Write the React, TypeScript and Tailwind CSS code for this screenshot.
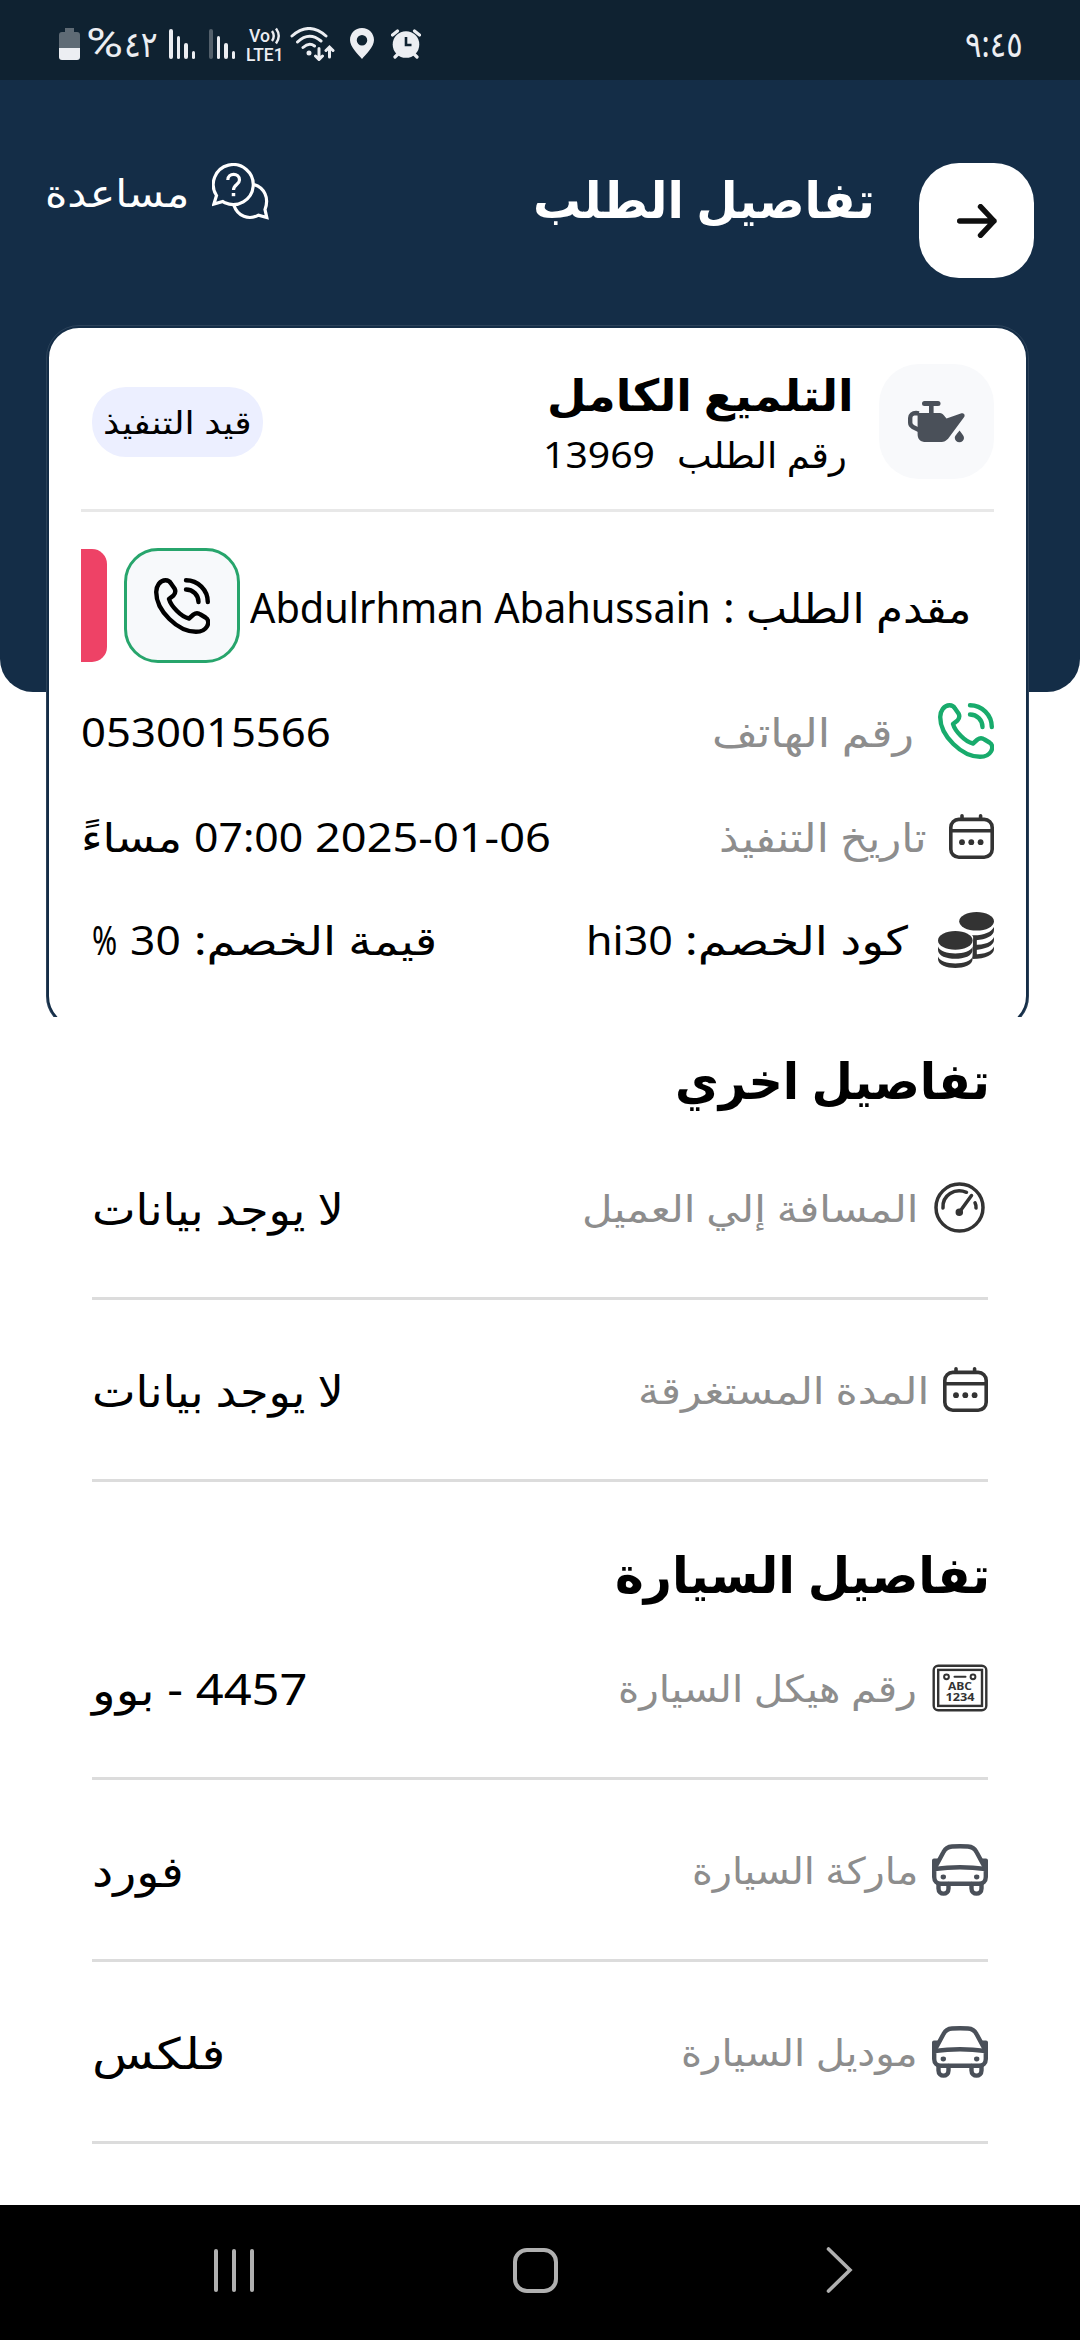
import { useLayoutEffect, useRef, useState, type ReactNode } from "react";

/* Single-line text that is stretched horizontally to a fixed width. */
function Fit({ w, className = "", dir = "rtl", children }: { w: number; className?: string; dir?: "rtl" | "ltr"; children: ReactNode }) {
  const ref = useRef<HTMLSpanElement>(null);
  const [scale, setScale] = useState(1);
  useLayoutEffect(() => {
    if (ref.current) setScale(w / ref.current.offsetWidth);
  }, [w]);
  return (
    <div dir="rtl" className={"flex shrink-0 justify-start whitespace-nowrap leading-none " + className} style={{ width: w }}>
      <span ref={ref} dir={dir} className="inline-block shrink-0 origin-right" style={{ transform: `scaleX(${scale})` }}>
        {children}
      </span>
    </div>
  );
}

function PhoneIcon() {
  return (
    <svg width="56" height="56" viewBox="0 0 56 56" fill="none" stroke="currentColor" strokeWidth="4.4" strokeLinecap="round" strokeLinejoin="round" className="shrink-0">
      <path d="M2.2 14C2.2 8 6 2.2 11.5 2.2C14 2.2 16 3.5 17 5.5L20.5 10.5C22 13 21.5 15 19.500 17.500L15 21C17 28 27 39 35 40.500L39.500 36.500C41.500 35 44.500 35 46.500 36.500L51.500 39.500C54.500 41.500 55 45 53 48.500C51 52 47 53.800 42 53.800C24 53.800 2.200 33 2.200 14Z" />
      <path d="M32 2.200C44 2.200 53.800 12 53.800 24M32 11.500C39 11.500 44.500 17 44.500 24" />
    </svg>
  );
}

function CalendarIcon() {
  return (
    <svg width="45" height="45" viewBox="0 0 45 45" fill="none" stroke="#333333" strokeWidth="3.600" strokeLinecap="round" className="shrink-0">
      <rect x="1.800" y="5.400" width="41.400" height="37.800" rx="8" />
      <path d="M2 16.700H43M13 1.800V5M31.600 1.800V5" />
      <g fill="#333333" stroke="none">
        <circle cx="13" cy="28.200" r="2.900" />
        <circle cx="22.300" cy="28.200" r="2.900" />
        <circle cx="31.600" cy="28.200" r="2.900" />
      </g>
    </svg>
  );
}

function CoinsIcon() {
  return (
    <svg width="56" height="56" viewBox="0 0 56 56" fill="#333333" className="shrink-0">
      <ellipse cx="38.6" cy="9.3" rx="17.4" ry="9.3" />
      <path d="M56 15V18C56 24 48 27.5 38 28.2L34 23.3C45 23.8 53 20.5 56 15Z" />
      <path d="M56 25V28C56 33.5 48 37.5 35.2 38.2V33C47 33 54 30 56 25Z" />
      <path d="M56 34.5V37C56 42.5 48 46.8 34.5 47L35.2 42.3C47 42.3 54 39.5 56 34.5Z" />
      <path d="M35.2 24H38.8V46H34.5Z" />
      <ellipse cx="17.3" cy="28.4" rx="17.3" ry="9.4" />
      <path d="M0 34.5C3 43.8 31.6 43.8 34.6 34.5V38C34.6 49.8 0 49.8 0 38Z" />
      <path d="M0 44.5C3 53.8 31.6 53.8 34.6 44.5V47C34.6 59 0 59 0 47Z" />
    </svg>
  );
}

function GaugeIcon() {
  return (
    <svg width="51" height="51" viewBox="0 0 51 51" fill="none" stroke="#333333" strokeWidth="3.500" strokeLinecap="round" className="mr-[3px] shrink-0">
      <circle cx="25.500" cy="25.500" r="23.500" />
      <path d="M9 26C8 13 21 5.500 32.500 10.300M41 20.800C41.800 22.500 42.200 24 42 26M37.500 13.500L25.500 30" />
      <circle cx="25.300" cy="30.300" r="2" />
    </svg>
  );
}

function PlateIcon() {
  return (
    <svg width="56" height="48" viewBox="0 0 56 48" fill="none" stroke="#333333" className="shrink-0">
      <rect x="1.700" y="1.700" width="52.600" height="44.600" rx="4.500" strokeWidth="2.400" />
      <rect x="6.200" y="5.900" width="43.800" height="36" strokeWidth="2.400" />
      <circle cx="14.500" cy="12.800" r="2.400" strokeWidth="2" />
      <circle cx="41" cy="12.800" r="2.400" strokeWidth="2" />
      <path d="M22.500 12.800H33.500" strokeWidth="2" strokeLinecap="round" />
      <g fill="#333333" stroke="none" className="font-['Open_Sans'] font-bold" textAnchor="middle">
        <text x="28" y="25.500" fontSize="11" textLength="24" lengthAdjust="spacingAndGlyphs">ABC</text>
        <text x="28" y="37" fontSize="10.500" textLength="29" lengthAdjust="spacingAndGlyphs">1234</text>
      </g>
    </svg>
  );
}

function CarIcon() {
  return (
    <svg width="56" height="52" viewBox="0 0 56 52" fill="none" stroke="#4a5059" strokeWidth="4.400" strokeLinecap="round" strokeLinejoin="round" className="shrink-0">
      <path d="M4.500 21L11.500 8C13.500 4 15.500 2.800 20 2.500Q28 1.900 36 2.500C40.500 2.800 42.500 4 44.500 8L51.500 21" />
      <path d="M2.500 25Q28 21.500 53.500 25M2.200 18V33C2.200 37 5 39.800 9 39.800H47C51 39.800 53.800 37 53.800 33V18" />
      <path d="M6.500 40V44.500C6.500 51.300 16.500 51.300 16.500 44.500V40M39.500 40V44.500C39.500 51.300 49.500 51.300 49.500 44.500V40" />
      <path d="M0 16.500Q0 14.500 2 14.500H7L4 23H0ZM56 16.500Q56 14.500 54 14.500H49L52 23H56Z" fill="#4a5059" stroke="none" />
      <g fill="#4a5059" stroke="none">
        <ellipse cx="11.300" cy="33" rx="2.700" ry="2.400" />
        <ellipse cx="44.700" cy="33" rx="2.700" ry="2.400" />
      </g>
    </svg>
  );
}

function OilCanIcon() {
  return (
    <svg width="57" height="42" viewBox="0 0 57 42" fill="#4a5059">
      <rect x="14" y="0" width="18.500" height="5" rx="2.500" />
      <rect x="21" y="3" width="4.600" height="11" />
      <path d="M9.600 12H31C34 12 35 13 38.500 17.500L53.500 12.300C56 11.500 57.500 14 56 16.200L41 36.500C38.500 39.800 36.500 41 32.500 41H18C12.500 41 9.600 38.500 9.600 33Z" />
      <path d="M11 12.500L8 12C4.500 12 2.200 14 2.200 17V21.500C2.200 23.500 3 24.800 5 26L11 29" fill="none" stroke="#4a5059" strokeWidth="4.400" />
      <path d="M51.500 29.500C54 33 56 34.500 56 37A4.600 4.200 0 0 1 46.800 37C46.800 34.500 49 33 51.500 29.500Z" />
    </svg>
  );
}

function HelpIcon() {
  return (
    <svg width="57" height="57" viewBox="0 0 57 57" fill="none" stroke="#fff" strokeWidth="3.200" strokeLinejoin="miter" className="shrink-0">
      <path d="M4.500 32.500A20 20 0 1 1 13 39.800L10.800 38.500L1.900 41.100Z" />
      <path d="M42 21.500C52 24.500 57.500 34.500 53 46.500L54.800 54.500L46.500 52.200C36.500 57.500 25.500 53 22 42.500" />
      <path d="M15.800 17C15.800 9.500 27.500 9.500 27.500 17C27.500 21.500 21.500 21.500 21.500 27" />
      <path d="M21.500 30V33.200" strokeWidth="3.500" />
    </svg>
  );
}

function SignalBars({ dim = false }: { dim?: boolean }) {
  return (
    <div className="flex h-[30px] items-end gap-[4px]">
      <div className={dim ? "h-[30px] w-[3.500px] rounded-full bg-[#53606b]" : "h-[30px] w-[3.500px] rounded-full bg-[#eceef2]"} />
      <div className="h-[23px] w-[3.500px] rounded-full bg-[#eceef2]" />
      <div className="h-[16px] w-[3.500px] rounded-full bg-[#eceef2]" />
      <div className="h-[8px] w-[3.500px] rounded-full bg-[#eceef2]" />
    </div>
  );
}

function StatusBar() {
  return (
    <div dir="ltr" className="flex h-[80px] items-center justify-between bg-[#0f2231] pt-[7px] pr-[57px] pl-[59px] text-[#eceef2]">
      <div className="flex items-center">
        <svg width="21" height="32" viewBox="0 0 21 32">
          <path d="M6 0H15V4H18Q21 4 21 7V20H0V7Q0 4 3 4H6Z" fill="#5f6b75" />
          <path d="M0 20H21V29Q21 32 18 32H3Q0 32 0 29Z" fill="#eceef2" />
        </svg>
        <Fit w={37} dir="ltr" className="ml-[6px] font-[Roboto] text-[41px]">%</Fit>
        <Fit w={34} className="ml-[1px] text-[36px]">٤٢</Fit>
        <div className="ml-[11px]"><SignalBars /></div>
        <div className="ml-[14px]"><SignalBars dim /></div>
        <svg width="42" height="44" viewBox="-2 -6 42 44" fill="#eceef2" className="ml-[9px] overflow-visible font-[Roboto] font-medium">
          <text x="3" y="14" fontSize="18" textLength="21" lengthAdjust="spacingAndGlyphs">Vo</text>
          <text x="0" y="32.500" fontSize="19" textLength="37.500" lengthAdjust="spacingAndGlyphs">LTE1</text>
          <path d="M26 3Q29.500 8 26 13M30 0.500Q35.500 8 30 15.500" fill="none" stroke="#eceef2" strokeWidth="2.400" />
        </svg>
        <svg width="46" height="34" viewBox="0 0 46 34" fill="none" stroke="#eceef2" strokeWidth="3" strokeLinecap="round" className="ml-[4px]">
          <path d="M2 9Q19 -6 36 9M7.500 15Q19 4 31 14M13 20.500Q19 15 24.500 19" />
          <circle cx="19" cy="26" r="1.500" fill="#eceef2" strokeWidth="2" />
          <path d="M29 21.500V32M25.500 29L29 32.500L32.500 29M39.500 30V20.500M36 23.500L39.500 20L43 23.500" />
        </svg>
        <svg width="24" height="31" viewBox="0 0 24 31" className="ml-[14px]">
          <path fillRule="evenodd" d="M12 0C5 0 0 5.500 0 12C0 19 8 26 12 31C16 26 24 19 24 12C24 5.500 19 0 12 0ZM12 7A5 5 0 1 1 12 17.500A5 5 0 1 1 12 7Z" fill="#eceef2" />
        </svg>
        <svg width="30" height="30" viewBox="0 0 30 30" className="ml-[17px]">
          <path d="M1.500 6L6.500 2M28.500 6L23.500 2M4 28L7 25M26 28L23 25" stroke="#eceef2" strokeWidth="3.200" strokeLinecap="round" />
          <circle cx="15" cy="15.500" r="13.300" fill="#eceef2" />
          <path d="M15 8V16H20.500" fill="none" stroke="#0f2231" strokeWidth="2.600" />
        </svg>
      </div>
      <Fit w={58} dir="ltr" className="text-[36px]">٩:٤٥</Fit>
    </div>
  );
}

function Header() {
  return (
    <header className="flex h-[612px] items-start rounded-b-[33px] bg-[#142d47] pt-[83px] pr-[46px] pl-[45px] text-white">
      <div className="flex h-[115px] w-[115px] items-center justify-center rounded-[40px] bg-white">
        <svg width="40" height="34" viewBox="0 0 40 34" fill="none" stroke="#0f0f0f" strokeWidth="5.400" strokeLinecap="round" strokeLinejoin="round">
          <path d="M2.700 17H37M23.500 2.700L37 17L23.500 31.300" />
        </svg>
      </div>
      <Fit w={342} className="mt-[11px] mr-[44px] text-[50px] font-bold">تفاصيل الطلب</Fit>
      <div className="mr-auto flex items-center gap-[23px]">
        <HelpIcon />
        <Fit w={144} className="text-[38px]">مساعدة</Fit>
      </div>
    </header>
  );
}

function OrderCard() {
  return (
    <div className="mr-[51px] ml-[46px] -mt-[367px] h-[692px] overflow-hidden">
      <section className="h-[704px] w-[983px] rounded-[33px] border-[3px] border-[#142d47] bg-white pr-[32px] pl-[32px] outline -outline-offset-1 outline-white/10">
        <div className="flex h-[184px] border-b-[3px] border-[#e8e8e8] pt-[36px]">
          <div className="flex h-[115px] w-[115px] items-center justify-center rounded-[40px] bg-[#f8f9fb]">
            <OilCanIcon />
          </div>
          <div className="mr-[25px]">
            <Fit w={307} className="mt-[8px] text-[44px] font-bold">التلميع الكامل</Fit>
            <div className="mt-[21px] mr-[7px] flex items-center gap-[22px] text-[36px]">
              <Fit w={170}>رقم الطلب</Fit>
              <Fit w={112} dir="ltr">13969</Fit>
            </div>
          </div>
          <div className="mt-[23px] mr-auto ml-[11px] flex h-[70px] w-[171px] items-center justify-center rounded-[34px] bg-[#ecefff]">
            <Fit w={149} className="text-[32px]">قيد التنفيذ</Fit>
          </div>
        </div>
        <div className="flex items-center pt-[36px]">
          <div className="flex items-center gap-[13px] pt-[4px] pr-[23px]">
            <Fit w={248} className="text-[41px]">مقدم الطلب :</Fit>
            <Fit w={460} dir="ltr" className="text-[41px]">Abdulrhman Abahussain</Fit>
          </div>
          <div className="mr-[10px] flex h-[115px] w-[116px] shrink-0 items-center justify-center rounded-[34px] border-[3px] border-[#27a56c] bg-[#f7f9fb] text-black">
            <PhoneIcon />
          </div>
          <div className="mr-auto h-[113px] w-[26px] rounded-r-[15px] bg-[#ee4266]" />
        </div>
        <div className="mt-[40px] flex h-[56px] items-center">
          <div className="text-[#18ab6c]"><PhoneIcon /></div>
          <Fit w={202} className="mt-[2px] mr-[24px] text-[40px] text-[#8d8d8d]">رقم الهاتف</Fit>
          <Fit w={250} dir="ltr" className="mt-[2px] mr-auto text-[40px]">0530015566</Fit>
        </div>
        <div className="mt-[49px] flex h-[57px] items-center">
          <CalendarIcon />
          <Fit w={208} className="mr-[22px] text-[40px] text-[#8d8d8d]">تاريخ التنفيذ</Fit>
          <div className="mr-auto flex gap-[12px] text-[40px]">
            <Fit w={236} dir="ltr">2025-01-06</Fit>
            <Fit w={109} dir="ltr">07:00</Fit>
            <Fit w={101}>مساءً</Fit>
          </div>
        </div>
        <div className="mt-[47px] flex h-[56px] items-center">
          <CoinsIcon />
          <div className="mr-[30px] flex gap-[12px] text-[40px]">
            <Fit w={223}>كود الخصم:</Fit>
            <Fit w={87} dir="ltr">hi30</Fit>
          </div>
          <div className="mr-auto ml-[11px] flex gap-[13px] text-[40px]">
            <Fit w={243}>قيمة الخصم:</Fit>
            <Fit w={51} dir="ltr">30</Fit>
            <Fit w={25} dir="ltr">%</Fit>
          </div>
        </div>
      </section>
    </div>
  );
}

type RowProps = { icon: ReactNode; label: string; labelW: number; gap: string; value: string; valueW: number };

function Row({ icon, label, labelW, gap, value, valueW }: RowProps) {
  return (
    <div className="mx-[92px] flex h-[182px] items-center border-b-[3px] border-[#dcdcdc]">
      {icon}
      <Fit w={labelW} className={gap + " text-[37px] text-[#8d8d8d]"}>{label}</Fit>
      <Fit w={valueW} className="mr-auto pt-[1px] text-[43px]">{value}</Fit>
    </div>
  );
}

function NavBar() {
  return (
    <div dir="ltr" className="mt-auto flex h-[135px] items-center justify-between bg-black pr-[227px] pb-[5px] pl-[214px]">
      <div className="flex gap-[14px]">
        <div className="h-[43px] w-[4px] rounded-full bg-[#b0b0b0]" />
        <div className="h-[43px] w-[4px] rounded-full bg-[#b0b0b0]" />
        <div className="h-[43px] w-[4px] rounded-full bg-[#b0b0b0]" />
      </div>
      <div className="mr-[9px] h-[45px] w-[45px] rounded-[14px] border-4 border-[#b0b0b0]" />
      <svg width="27" height="46" viewBox="0 0 27 46" fill="none" stroke="#b0b0b0" strokeWidth="3.600" strokeLinecap="round">
        <path d="M2.500 2L24 23L2.500 44" />
      </svg>
    </div>
  );
}

export default function App() {
  return (
    <main dir="rtl" className="flex h-[2340px] w-[1080px] flex-col overflow-hidden bg-white font-['Noto_Sans','DejaVu_Sans',sans-serif] text-black">
      <StatusBar />
      <Header />
      <OrderCard />
      <div className="mx-[90px] h-[101px] pt-[38px]">
        <Fit w={315} className="text-[50px] font-bold">تفاصيل اخري</Fit>
      </div>
      <Row icon={<GaugeIcon />} label="المسافة إلي العميل" labelW={336} gap="mr-[16px]" value="لا يوجد بيانات" valueW={252} />
      <Row icon={<CalendarIcon />} label="المدة المستغرقة" labelW={291} gap="mr-[14px]" value="لا يوجد بيانات" valueW={252} />
      <div className="mx-[90px] h-[116px] pt-[67px]">
        <Fit w={375} className="text-[50px] font-bold">تفاصيل السيارة</Fit>
      </div>
      <Row icon={<PlateIcon />} label="رقم هيكل السيارة" labelW={299} gap="mr-[15px]" value="4457 - بوو" valueW={216} />
      <Row icon={<CarIcon />} label="ماركة السيارة" labelW={226} gap="mr-[14px]" value="فورد" valueW={92} />
      <Row icon={<CarIcon />} label="موديل السيارة" labelW={237} gap="mr-[14px]" value="فلكس" valueW={133} />
      <NavBar />
    </main>
  );
}
